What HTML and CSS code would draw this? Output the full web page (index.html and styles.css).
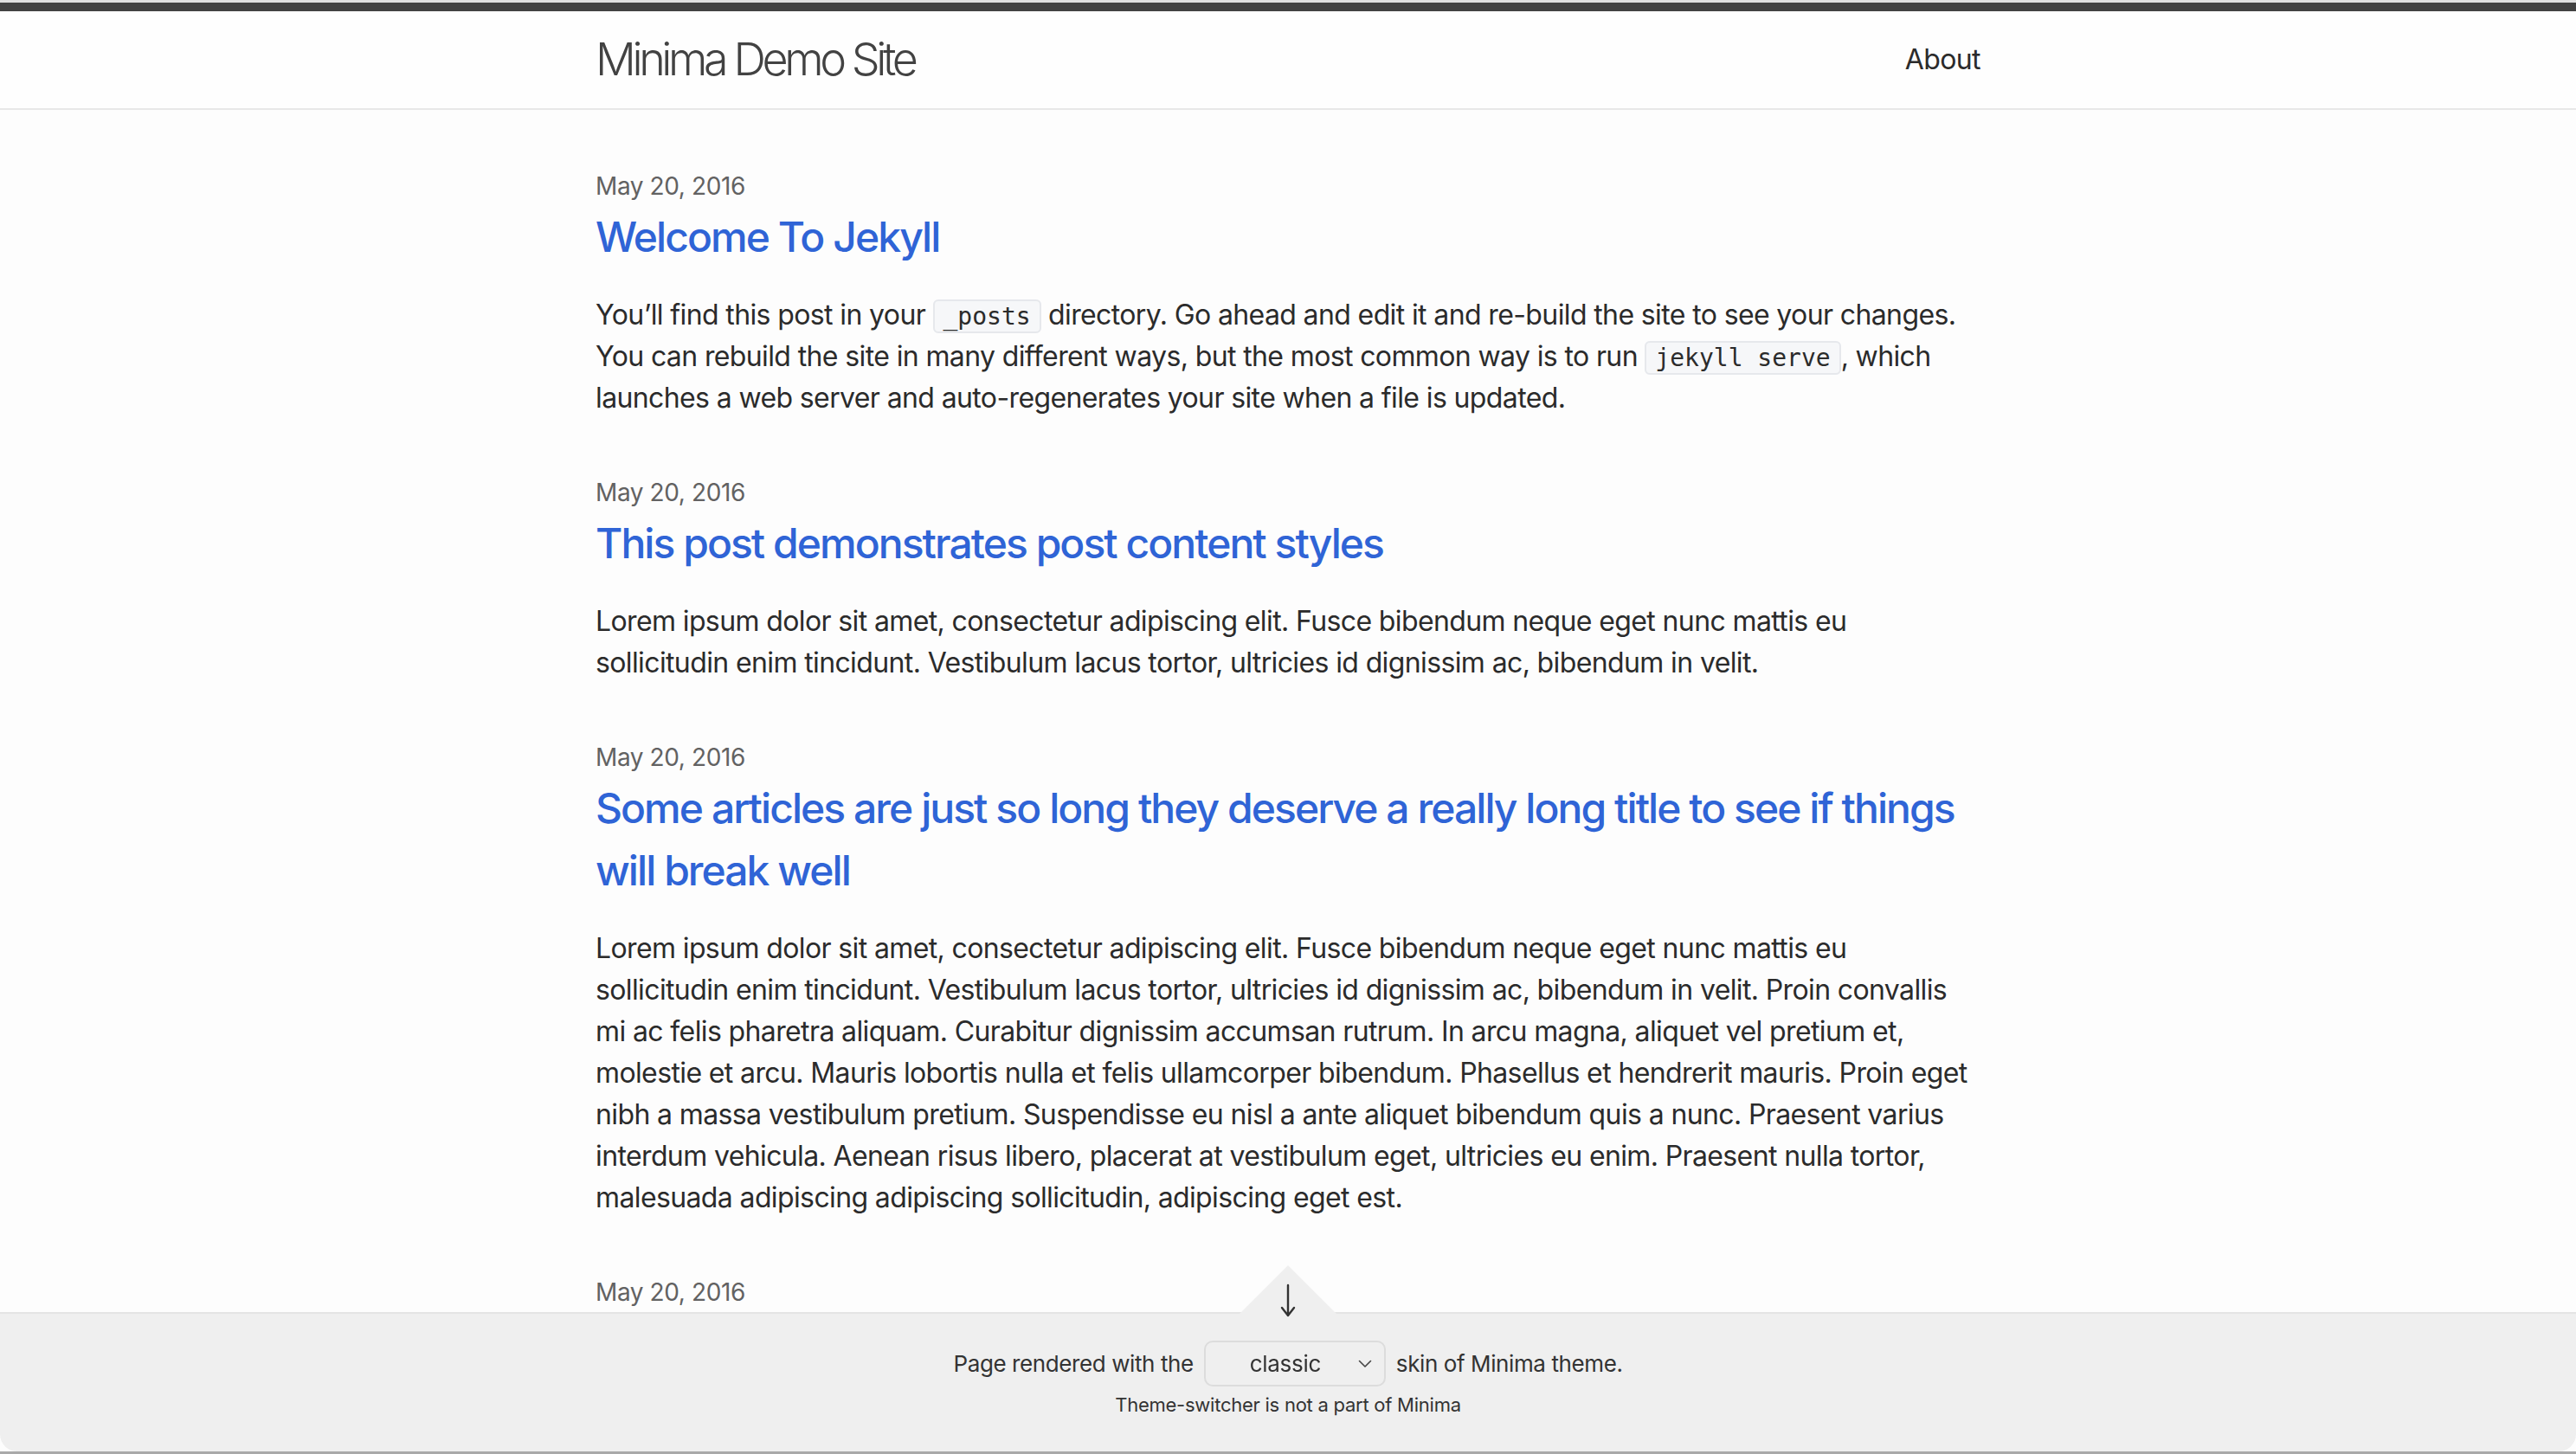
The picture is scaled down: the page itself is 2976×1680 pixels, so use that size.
FILE: index.html
```html
<!DOCTYPE html>
<html lang="en">
<head>
<meta charset="utf-8">
<title>Minima Demo Site</title>
<link rel="stylesheet" href="styles.css">
</head>
<body>
<div class="window">
  <header class="site-header">
    <div class="wrapper header-row">
      <a class="site-title" href="#">Minima Demo Site</a>
      <nav class="site-nav"><a class="page-link" href="#">About</a></nav>
    </div>
  </header>

  <main class="page-content">
    <div class="wrapper">
      <ul class="post-list">
        <li>
          <span class="post-meta">May 20, 2016</span>
          <h3><a class="post-link" href="#">Welcome To Jekyll</a></h3>
          <p>You’ll find this post in your <code>_posts</code> directory. Go ahead and edit it and re-build the site to see your changes. You can rebuild the site in many different ways, but the most common way is to run <code>jekyll serve</code>, which launches a web server and auto-regenerates your site when a file is updated.</p>
        </li>
        <li>
          <span class="post-meta">May 20, 2016</span>
          <h3><a class="post-link" href="#">This post demonstrates post content styles</a></h3>
          <p>Lorem ipsum dolor sit amet, consectetur adipiscing elit. Fusce bibendum neque eget nunc mattis eu sollicitudin enim tincidunt. Vestibulum lacus tortor, ultricies id dignissim ac, bibendum in velit.</p>
        </li>
        <li>
          <span class="post-meta">May 20, 2016</span>
          <h3><a class="post-link" href="#">Some articles are just so long they deserve a really long title to see if things will break well</a></h3>
          <p>Lorem ipsum dolor sit amet, consectetur adipiscing elit. Fusce bibendum neque eget nunc mattis eu sollicitudin enim tincidunt. Vestibulum lacus tortor, ultricies id dignissim ac, bibendum in velit. Proin convallis mi ac felis pharetra aliquam. Curabitur dignissim accumsan rutrum. In arcu magna, aliquet vel pretium et, molestie et arcu. Mauris lobortis nulla et felis ullamcorper bibendum. Phasellus et hendrerit mauris. Proin eget nibh a massa vestibulum pretium. Suspendisse eu nisl a ante aliquet bibendum quis a nunc. Praesent varius interdum vehicula. Aenean risus libero, placerat at vestibulum eget, ultricies eu enim. Praesent nulla tortor, malesuada adipiscing adipiscing sollicitudin, adipiscing eget est.</p>
        </li>
        <li>
          <span class="post-meta">May 20, 2016</span>
          <h3><a class="post-link" href="#">Code Block Showcase</a></h3>
          <p>Used to showcase the issue. For more information, see <a href="#">Creating a custom skin for Minima</a>.</p>
        </li>
      </ul>
    </div>
  </main>
</div>

<div class="switcher">
  <div class="switcher-tab">
    <svg class="switcher-arrow" width="20" height="40" viewBox="0 0 20 40" aria-hidden="true">
      <path d="M10 2 V37 M3 28 L10 37 L17 28" fill="none" stroke="#333" stroke-width="2.4" stroke-linecap="round" stroke-linejoin="round"/>
    </svg>
  </div>
  <div class="switcher-row">
    <span>Page rendered with the</span>
    <span class="select-box">
      <select class="skin-select">
        <option>classic</option>
        <option>dark</option>
        <option>auto</option>
      </select>
      <svg class="chevron" width="16" height="10" viewBox="0 0 16 10" aria-hidden="true">
        <path d="M1.5 1.5 L8 8 L14.5 1.5" fill="none" stroke="#444" stroke-width="1.6" stroke-linecap="round" stroke-linejoin="round"/>
      </svg>
    </span>
    <span>skin of Minima theme.</span>
  </div>
  <p class="switcher-note">Theme-switcher is not a part of Minima</p>
</div>
<div class="bottom-edge"></div>
</body>
</html>
```

FILE: styles.css
```css
* {
  box-sizing: border-box;
}

html, body {
  margin: 0;
  padding: 0;
}

body {
  background: #fdfdfd;
  color: #2b2b2b;
  font-family: Inter, "Noto Sans", "Liberation Sans", sans-serif;
  font-size: 32px;
  line-height: 1.5;
  font-weight: 400;
  overflow: hidden;
  height: 1680px;
}

a {
  text-decoration: none;
}

.window {
  border-top: 3px solid #e0e0e0;
}

.wrapper {
  max-width: 1600px;
  margin: 0 auto;
}

.site-header {
  border-top: 10px solid #424242;
  border-bottom: 2px solid #e8e8e8;
  min-height: 112px;
  background: #fefefe;
}

.header-row {
  display: flex;
  justify-content: space-between;
  align-items: center;
  height: 112px;
}

.site-title {
  font-size: 52px;
  font-weight: 300;
  letter-spacing: -4.4px;
  line-height: 108px;
  color: #424242;
}

.page-link {
  color: #2b2b2b;
  font-size: 32px;
  line-height: 108px;
  letter-spacing: -0.6px;
}

.page-content {
  padding: 63px 0 60px;
}

.post-list {
  list-style: none;
  margin: 0;
  padding: 0;
}

.post-list > li {
  margin-bottom: 60px;
}

.post-meta {
  font-size: 28px;
  color: #626262;
  letter-spacing: -0.4px;
}

.post-list h3 {
  margin: 0 0 30px;
  font-size: 48px;
  line-height: 72px;
  font-weight: 500;
  letter-spacing: -1.95px;
}

.post-link {
  color: #2f64d6;
}

.post-list p {
  margin: 0 0 30px;
  letter-spacing: -0.62px;
}

.post-list p a {
  color: #2f64d6;
}

code {
  font-family: "DejaVu Sans Mono", "Liberation Mono", monospace;
  font-size: 28px;
  letter-spacing: 0;
  background: #f6f7f9;
  border: 2px solid #e6e8ec;
  border-radius: 6px;
  padding: 1px 10px;
  color: #2b2b2b;
}

/* theme switcher overlay */
.switcher {
  position: fixed;
  left: 0;
  right: 0;
  bottom: 3px;
  height: 161px;
  background: #efefef;
  border-top: 2px solid #e4e4e4;
  border-radius: 0 0 20px 20px;
  text-align: center;
  color: #333;
}

.switcher-tab {
  position: absolute;
  left: 50%;
  bottom: 100%;
  margin-left: -56px;
  width: 0;
  height: 0;
  border-left: 56px solid transparent;
  border-right: 56px solid transparent;
  border-bottom: 56px solid #efefef;
}

.switcher-arrow {
  position: absolute;
  left: -10px;
  top: 21px;
}

.switcher-row {
  display: flex;
  justify-content: center;
  align-items: center;
  gap: 12px;
  margin-top: 31px;
  font-size: 26px;
  letter-spacing: -0.4px;
  line-height: 53px;
}

.select-box {
  position: relative;
  display: inline-block;
  width: 210px;
  height: 53px;
}

.skin-select {
  appearance: none;
  -webkit-appearance: none;
  width: 100%;
  height: 100%;
  background: #efefef;
  border: 2px solid #dcdcdc;
  border-radius: 10px;
  font-family: Inter, "Noto Sans", "Liberation Sans", sans-serif;
  font-size: 26px;
  letter-spacing: -0.3px;
  color: #333;
  padding: 0 40px 0 18px;
  text-align: center;
  text-align-last: center;
}

.chevron {
  position: absolute;
  right: 16px;
  top: 22px;
  pointer-events: none;
}

.switcher-note {
  margin: 6px 0 0;
  font-size: 22px;
  letter-spacing: -0.25px;
  line-height: 30px;
  color: #333;
}

.bottom-edge {
  position: fixed;
  left: 0;
  right: 0;
  bottom: 0;
  height: 3px;
  background: #a9a9a9;
}
```
